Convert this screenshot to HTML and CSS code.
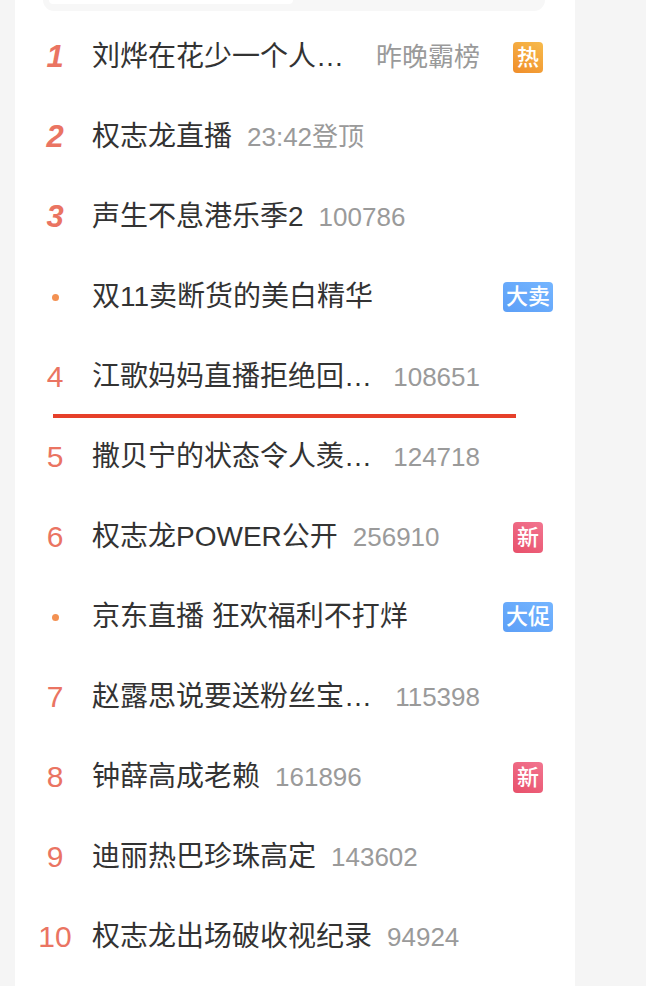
FILE: index.html
```html
<!DOCTYPE html>
<html lang="zh-CN">
<head>
<meta charset="utf-8">
<title>热搜榜</title>
<link rel="stylesheet" href="styles.css">
</head>
<body>
<div class="card">
  <div class="tabs"><div class="tab-active"></div></div>
  <ul class="list">
    <li class="row">
      <span class="rank top">1</span>
      <div class="main"><span class="title">刘烨在花少一个人撑起全场</span><span class="meta">昨晚霸榜</span></div>
      <div class="tag-col"><span class="tag hot">热</span></div>
    </li>
    <li class="row">
      <span class="rank top">2</span>
      <div class="main"><span class="title">权志龙直播</span><span class="meta">23:42登顶</span></div>
      <div class="tag-col"></div>
    </li>
    <li class="row">
      <span class="rank top">3</span>
      <div class="main"><span class="title">声生不息港乐季2</span><span class="meta">100786</span></div>
      <div class="tag-col"></div>
    </li>
    <li class="row">
      <span class="rank"><span class="dot"></span></span>
      <div class="main"><span class="title">双11卖断货的美白精华</span></div>
      <div class="tag-col"><span class="tag ad">大卖</span></div>
    </li>
    <li class="row marked">
      <span class="rank">4</span>
      <div class="main"><span class="title">江歌妈妈直播拒绝回应质疑</span><span class="meta">108651</span></div>
      <div class="tag-col"></div>
      <span class="marker"></span>
    </li>
    <li class="row">
      <span class="rank">5</span>
      <div class="main"><span class="title">撒贝宁的状态令人羡慕了吧</span><span class="meta">124718</span></div>
      <div class="tag-col"></div>
    </li>
    <li class="row">
      <span class="rank">6</span>
      <div class="main"><span class="title">权志龙POWER公开</span><span class="meta">256910</span></div>
      <div class="tag-col"><span class="tag new">新</span></div>
    </li>
    <li class="row">
      <span class="rank"><span class="dot"></span></span>
      <div class="main"><span class="title">京东直播 狂欢福利不打烊</span></div>
      <div class="tag-col"><span class="tag ad">大促</span></div>
    </li>
    <li class="row">
      <span class="rank">7</span>
      <div class="main"><span class="title">赵露思说要送粉丝宝贝礼物</span><span class="meta">115398</span></div>
      <div class="tag-col"></div>
    </li>
    <li class="row">
      <span class="rank">8</span>
      <div class="main"><span class="title">钟薛高成老赖</span><span class="meta">161896</span></div>
      <div class="tag-col"><span class="tag new">新</span></div>
    </li>
    <li class="row">
      <span class="rank">9</span>
      <div class="main"><span class="title">迪丽热巴珍珠高定</span><span class="meta">143602</span></div>
      <div class="tag-col"></div>
    </li>
    <li class="row">
      <span class="rank">10</span>
      <div class="main"><span class="title">权志龙出场破收视纪录</span><span class="meta">94924</span></div>
      <div class="tag-col"></div>
    </li>
  </ul>
</div>
</body>
</html>
```

FILE: styles.css
```css
html, body {
  margin: 0;
  padding: 0;
  background: #f5f5f5;
}

body {
  font-family: "Liberation Sans", "Noto Sans CJK SC", sans-serif;
}

.card {
  width: 560px;
  margin-left: 15px;
  min-height: 100vh;
  background: #ffffff;
}

.tabs {
  margin: 0 30px 0 28px;
  height: 11px;
  background: #f7f7f7;
  border-radius: 0 0 12px 12px;
}

.tab-active {
  margin-left: 6px;
  width: 244px;
  height: 4px;
  background: #ffffff;
  border-radius: 0 0 8px 8px;
}

.list {
  list-style: none;
  margin: 6px 0 0;
  padding: 0;
}

.row {
  position: relative;
  display: flex;
  align-items: center;
  height: 80px;
  padding: 0 21px 0 20px;
}

.rank {
  flex: none;
  width: 40px;
  text-align: center;
  font-size: 30px;
  line-height: 40px;
  color: #ea7462;
  display: flex;
  align-items: center;
  justify-content: center;
}

.rank.top {
  font-size: 31px;
  font-weight: bold;
  font-style: italic;
}

.dot {
  width: 7px;
  height: 7px;
  border-radius: 50%;
  background: #f39152;
}

.main {
  flex: 1;
  min-width: 0;
  display: flex;
  align-items: center;
  margin-left: 17px;
}

.title {
  flex: 0 1 auto;
  min-width: 0;
  overflow: hidden;
  white-space: nowrap;
  text-overflow: ellipsis;
  font-size: 28px;
  line-height: 40px;
  color: #333333;
}

.meta {
  flex: none;
  margin-left: 15px;
  font-size: 26px;
  line-height: 40px;
  color: #9a9a9a;
  white-space: nowrap;
}

.tag-col {
  flex: none;
  width: 52px;
  margin-left: 22px;
  display: flex;
  justify-content: center;
}

.tag {
  display: block;
  height: 31px;
  padding: 0 4px;
  border-radius: 4px;
  font-size: 22px;
  line-height: 31px;
  font-weight: 500;
  color: #ffffff;
  text-align: center;
}

.tag.hot {
  background: linear-gradient(30deg, #f08d2a, #f7bb4c);
}

.tag.new {
  background: linear-gradient(30deg, #e8506a, #f27590);
}

.tag.ad {
  background: linear-gradient(30deg, #5c9ff7, #74b5ff);
  height: 30px;
  line-height: 30px;
  padding: 0 3px;
}

.marker {
  position: absolute;
  left: 38px;
  bottom: -1px;
  width: 463px;
  height: 4px;
  background: #e6402a;
}
```
